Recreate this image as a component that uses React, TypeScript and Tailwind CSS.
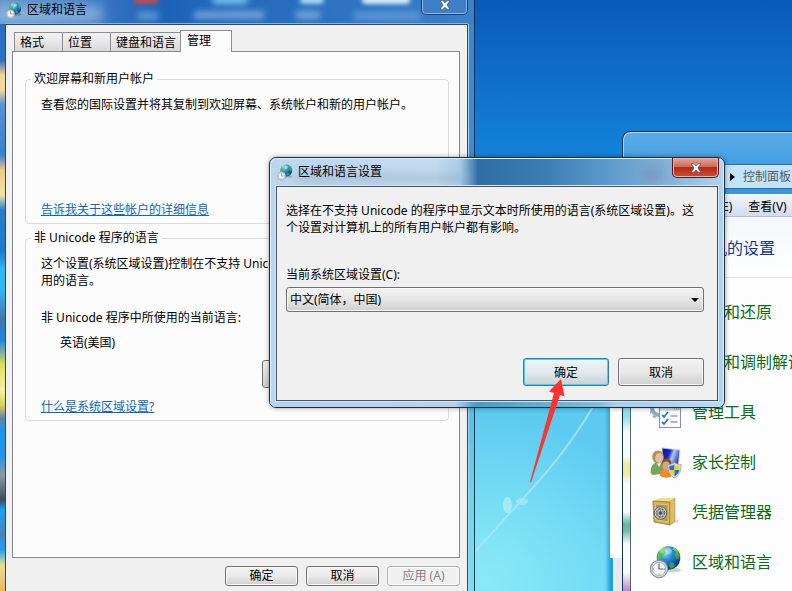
import type { ReactNode } from 'react';

function GlobeClock({ className }: { className: string }) {
  return (
    <svg viewBox="0 0 32 34" className={className} aria-hidden="true">
      <defs>
        <radialGradient id="globe" cx="0.35" cy="0.25" r="0.8">
          <stop offset="0" stopColor="#9be8ff" />
          <stop offset="0.4" stopColor="#2b8fd8" />
          <stop offset="1" stopColor="#062a8c" />
        </radialGradient>
        <linearGradient id="land" x1="0" y1="0" x2="1" y2="1">
          <stop offset="0" stopColor="#8be05a" />
          <stop offset="1" stopColor="#1c8a2c" />
        </linearGradient>
      </defs>
      <ellipse cx="22" cy="25" rx="9" ry="2.500" fill="#000" opacity="0.18" />
      <circle cx="18.500" cy="13" r="11.800" fill="url(#globe)" />
      <path d="M8 10c1-4 5-8 9-8.500l1 2-3 2 1 3-4 2-1 4-3 2c-1-2-1-4 0-6.500z" fill="url(#land)" />
      <path d="M24 2.500c3 1.500 5.500 4.500 6.200 8l-1.700 4-2.500-1-1-4 1-2.500-3-2.500z" fill="url(#land)" />
      <path d="M20 17l4 1.500 1 3-4 2.500-2-3z" fill="#35a544" />
      <ellipse cx="16" cy="6" rx="6" ry="3.500" fill="#fff" opacity="0.35" />
      <circle cx="9" cy="24" r="8.600" fill="#d5d9dd" stroke="#9299a0" strokeWidth="1.200" />
      <circle cx="9" cy="24" r="6.600" fill="#f3f6f8" stroke="#a9b1b8" strokeWidth="0.900" />
      <path d="M9 18.500V24h4.500M9 28.500v1M4 24h-1M15 24h-1" stroke="#5c666e" strokeWidth="1.100" fill="none" />
    </svg>
  );
}

function AdminTools() {
  return (
    <svg viewBox="0 0 32 34" className="h-[34px] w-8" aria-hidden="true">
      <circle cx="9" cy="13" r="7" fill="none" stroke="#8fa9c2" strokeWidth="4" />
      <circle cx="9" cy="13" r="9.500" fill="none" stroke="#9db5cb" strokeWidth="3" strokeDasharray="3 3" />
      <circle cx="22" cy="8" r="6" fill="none" stroke="#a9b4be" strokeWidth="3" />
      <rect x="9.500" y="12.500" width="21" height="20" fill="#fafbfc" stroke="#8b9196" />
      <rect x="10" y="13" width="20" height="2.500" fill="#d5dade" />
      <path d="M24 14h1M26 14h1M28 14h1" stroke="#666" />
      <path d="M12 20l2 2 4-5M12 27l2 2 4-5" fill="none" stroke="#2181b8" strokeWidth="1.800" />
      <path d="M20.500 21h7M20.500 27h7" stroke="#70777d" strokeWidth="1.200" />
    </svg>
  );
}

function ParentalControls() {
  return (
    <svg viewBox="0 0 32 34" className="h-[34px] w-8" aria-hidden="true">
      <defs>
        <linearGradient id="screen" x1="0" y1="0" x2="1" y2="0.4">
          <stop offset="0" stopColor="#08108c" />
          <stop offset="0.45" stopColor="#1c2cc8" />
          <stop offset="0.65" stopColor="#b5c6f6" />
          <stop offset="1" stopColor="#2844c0" />
        </linearGradient>
      </defs>
      <path d="M12 3l18 2-2 17-15-3z" fill="url(#screen)" stroke="#c9ced6" strokeWidth="0.800" />
      <path d="M0.500 28c0-7 3-11 8-11s7 3 7 9l-4 3-9 1z" fill="#7ba35c" />
      <path d="M6 17l3 5 3-5z" fill="#f0efe6" />
      <ellipse cx="8" cy="12" rx="5.800" ry="6.500" fill="#b08f5c" />
      <ellipse cx="9.200" cy="13" rx="4" ry="5" fill="#e3c09a" />
      <path d="M10 31c0-5 3-7 6-7s6 3 5 8c-4 1-8 1-11-1z" fill="#ef8a2e" />
      <circle cx="16.500" cy="18.500" r="5" fill="#7d5430" />
      <ellipse cx="16" cy="20.500" rx="3.600" ry="4" fill="#dca878" />
      <path d="M24.500 17.500c2 1.600 4.500 2 6.500 2 .3 6-1.500 11-6.500 13.500-5-2.500-6.800-7.500-6.500-13.500 2 0 4.500-.4 6.500-2z" fill="#dfe5ea" stroke="#8894a0" strokeWidth="0.700" />
      <path d="M24.500 19.300v5.700h-5c-.3-1.500-.3-3-.2-4.200 2 0 3.700-.5 5.200-1.500z" fill="#2272c8" />
      <path d="M24.500 19.300v5.700h5c.3-1.500.3-3 .2-4.200-2 0-3.700-.5-5.200-1.500z" fill="#f8cb28" />
      <path d="M19.500 25h5v6.400c-3-1.600-4.500-3.800-5-6.400z" fill="#f8cb28" />
      <path d="M29.500 25h-5v6.400c3-1.600 4.500-3.800 5-6.400z" fill="#2272c8" />
    </svg>
  );
}

function Safe() {
  return (
    <svg viewBox="0 0 32 34" className="h-[34px] w-8" aria-hidden="true">
      <path d="M20 28l9-4-1 3-8 3z" fill="#000" opacity="0.15" />
      <path d="M3 6l7-3h15l-5 4z" fill="#efdb98" />
      <path d="M3 6l17 1v23L4 27z" fill="#cfae55" stroke="#8d7230" strokeWidth="0.800" />
      <path d="M20 7l5-4v23l-5 4z" fill="#dcbf6a" stroke="#a88a40" strokeWidth="0.600" />
      <path d="M5.500 9l12.500.8v17L6 24.800z" fill="#b9963f" stroke="#ead68e" strokeWidth="0.700" />
      <circle cx="10.500" cy="18" r="6.300" fill="#c9ccce" stroke="#62666a" />
      <circle cx="10.500" cy="18" r="4" fill="none" stroke="#6a6e72" strokeWidth="1.500" strokeDasharray="2 1.200" />
      <path d="M10.500 13v10M5.500 18h10M7 14.500l7 7M14 14.500l-7 7" stroke="#808488" strokeWidth="0.900" />
      <circle cx="10.500" cy="18" r="1.800" fill="#54585c" />
    </svg>
  );
}

function CloseGlyph() {
  return (
    <svg viewBox="0 0 12 10" className="h-[10px] w-3" aria-hidden="true">
      <path
        d="M1 0.800h3.200L6 2.900 7.800.8H11L7.900 5 11 9.200H7.800L6 7.100 4.200 9.200H1L4.100 5z"
        fill="#fff"
        stroke="#4a4f5c"
        strokeWidth="0.700"
      />
    </svg>
  );
}

function Wallpaper() {
  return (
    <svg
      className="absolute inset-0 h-full w-full"
      viewBox="0 0 792 591"
      preserveAspectRatio="xMidYMid slice"
      aria-hidden="true"
    >
      <defs>
        <linearGradient id="sky" x1="0" y1="0" x2="0" y2="1">
          <stop offset="0" stopColor="#0a5ab8" />
          <stop offset="0.25" stopColor="#1380d8" />
          <stop offset="0.5" stopColor="#2ba3e4" />
          <stop offset="0.7" stopColor="#5bcaef" />
          <stop offset="1" stopColor="#68d6f5" />
        </linearGradient>
        <radialGradient id="glow" gradientUnits="userSpaceOnUse" cx="485" cy="580" r="170">
          <stop offset="0" stopColor="#8eebf8" stopOpacity="0.9" />
          <stop offset="1" stopColor="#8eebf8" stopOpacity="0" />
        </radialGradient>
        <linearGradient id="edge" x1="0" y1="0" x2="1" y2="0">
          <stop offset="0" stopColor="#2f9fd6" stopOpacity="0" />
          <stop offset="1" stopColor="#3a9cc8" stopOpacity="0.9" />
        </linearGradient>
      </defs>
      <rect width="792" height="591" fill="url(#sky)" />
      <rect x="300" y="400" width="360" height="191" fill="url(#glow)" />
      <path d="M472 555L511 512C540 480 568 450 594 405" fill="none" stroke="#a9e4f8" strokeWidth="2" opacity="0.85" />
      <ellipse cx="507.500" cy="505" rx="4.500" ry="8" fill="#a9ecf6" opacity="0.85" />
      <ellipse cx="522" cy="501.500" rx="6" ry="3.500" fill="#a2e6f6" opacity="0.8" />
      <rect x="605" y="405" width="5" height="186" fill="url(#edge)" />
    </svg>
  );
}

const panelItems: { name: string; icon: ReactNode }[] = [
  { name: '备份和还原', icon: null },
  { name: '电话和调制解调器', icon: null },
  { name: '管理工具', icon: <AdminTools /> },
  { name: '家长控制', icon: <ParentalControls /> },
  { name: '凭据管理器', icon: <Safe /> },
  { name: '区域和语言', icon: <GlobeClock className="h-[34px] w-8" /> },
];

function ControlPanelWindow() {
  return (
    <section className="absolute top-[131px] right-0 bottom-0 left-[622px] flex flex-col overflow-hidden rounded-tl-lg border-t border-l border-[#12335a] bg-gradient-to-b from-[#5aade9] to-[#3a97de] to-10% whitespace-nowrap shadow-[inset_1px_1px_0_#a5d6f6]">
      <div className="mt-8 ml-[7px] flex h-[25px] items-center gap-2 border border-r-0 border-[#2f6f9f] bg-[#c5e3f7] pl-[99px] text-xs text-[#4d5c68]">
        <svg viewBox="0 0 5 8" className="h-2 w-[5px]" aria-hidden="true">
          <path d="M0 0l5 4-5 4z" fill="#000" />
        </svg>
        <span>控制面板</span>
      </div>
      <div className="flex min-h-0 flex-1 pt-[5px]">
        <div className="w-[7px] bg-[linear-gradient(180deg,#b5d5ee_0,#dcebf5_200px,#8be0e6_215px,#8be0e6_222px,#f8fcfc_238px,#f8fcfc_262px,#f0ec9c_270px,#f0ec9c_280px,#f8fcfc_290px,#f8fcfc_318px,#62b79c_330px,#72bca4_337px,#f8fcfc_350px,#f8fcfc_378px,#b887b8_398px)]" />
        <div className="min-w-0 flex-1 border-l border-[#53616c] bg-[#fdfdfe]">
          <nav className="flex h-[23px] items-center gap-4 border-b border-[#b6bccb] bg-gradient-to-b from-[#f3f6fb] to-[#d4dbed] pt-1 pl-2.5 text-xs text-black">
            <span>文件(F)</span>
            <span>编辑(E)</span>
            <span>查看(V)</span>
          </nav>
          <header className="flex h-[61px] items-center border-b border-[#dfe5ea] bg-gradient-to-b from-[#f4f8fc] to-white pt-0.5 pl-4">
            <h2 className="text-base text-[#103a94]">调整计算机的设置</h2>
          </header>
          <ul className="pt-[9px] pl-[19px] text-base text-[#0e6b1c]">
            {panelItems.map((item) => (
              <li key={item.name} className="flex h-[50px] items-center gap-2.5">
                <span className="flex w-8 shrink-0">{item.icon}</span>
                <a href="#item">{item.name}</a>
              </li>
            ))}
          </ul>
        </div>
      </div>
    </section>
  );
}

function SmallButton({ children, disabled = false }: { children: ReactNode; disabled?: boolean }) {
  return (
    <button
      type="button"
      disabled={disabled}
      className="h-5 w-[73px] rounded-[3px] border border-[#707070] bg-gradient-to-b from-[#f2f2f2] via-[#ebebeb] via-50% to-[#cfcfcf] text-xs leading-none text-black shadow-[inset_0_0_0_1px_#fafafa] disabled:border-[#adb2b5] disabled:bg-none disabled:text-[#838383]"
    >
      {children}
    </button>
  );
}

function Tab({ children, selected = false }: { children: ReactNode; selected?: boolean }) {
  return (
    <button
      type="button"
      role="tab"
      aria-selected={selected}
      className="-mr-px h-[19px] border border-b-0 border-[#8c8e94] bg-gradient-to-b from-[#f3f3f3] to-[#d9d9d9] pt-0.5 pr-[18px] pl-[5px] text-xs leading-none nth-3:pr-1 aria-selected:z-10 aria-selected:-mb-px aria-selected:h-[22px] aria-selected:bg-none aria-selected:bg-[#fcfcfc] aria-selected:pb-1 aria-selected:pl-1.5 aria-selected:pr-5"
    >
      {children}
    </button>
  );
}

function Group({ title, children }: { title: string; children: ReactNode }) {
  return (
    <fieldset className="rounded-[4px] border border-[#d8dcdf] px-[5px] pb-[5px]">
      <legend className="px-[3px] leading-[18px]">{title}</legend>
      {children}
    </fieldset>
  );
}

function RegionWindow() {
  return (
    <section className="absolute inset-y-0 left-0 flex w-[475px] flex-col overflow-hidden border-r border-[#0c3358] bg-[linear-gradient(180deg,#3d84cb_0,#3f90d8_200px,#55bce4_400px,#62dbe8_500px,#6ee6ea_100%)]">
      <div className="absolute inset-y-0 left-0 w-[5px] bg-[linear-gradient(180deg,#2a6fc0_0,#2a6fc0_60px,#f0d79a_75px,#f0d79a_90px,#5b8fd0_105px,#3a80cf_155px,#f0c890_170px,#efe3a0_195px,#2a7ccd_210px,#1f77cc_250px,#35b5f0_270px,#35b5f0_290px,#3d77a8_320px,#1b84dc_340px,#e3dc62_365px,#f4f2a0_390px,#d9cf60_405px,#6784a0_418px,#1f95ea_430px,#1f95ea_455px,#8a98a8_475px,#3c4a5c_500px,#1fa0ee_510px,#4a83bc_535px,#1fa0ee_550px,#e8dc98_565px,#edb765_591px)]" />
      <header className="relative flex h-6 shrink-0 items-start justify-between overflow-hidden bg-gradient-to-r from-[#5a90cc] via-[#1c63b8] via-35% to-[#3c80c8]">
        <div className="absolute top-1 -left-2 h-5 w-28 rounded-full bg-[#a9c9e8] opacity-60 blur-[6px]" />
        <div className="absolute top-[-4px] left-[134px] h-2 w-6 rounded-full bg-[#c34a4a] blur-[2px]" />
        <div className="absolute top-3 left-[138px] h-2 w-5 bg-[#86b5e2] opacity-60 blur-[3px]" />
        <div className="absolute top-[-4px] left-[212px] h-2 w-9 rounded-full bg-[#8cdcf8] opacity-80 blur-[3px]" />
        <div className="absolute top-[11px] left-[194px] h-2 w-[70px] bg-[#8fbbe6] opacity-70 blur-[3px]" />
        <div className="absolute top-[-4px] left-[300px] h-2 w-6 rounded-full bg-[#a4d8f2] blur-[2px]" />
        <div className="absolute top-[11px] left-[296px] h-2 w-6 bg-[#8fbbe6] opacity-70 blur-[3px]" />
        <div className="absolute top-[-4px] left-[362px] h-2 w-12 rounded-full bg-[#dcebf7] blur-[2px]" />
        <div className="absolute top-3 left-[354px] h-2 w-[66px] bg-[#7aace0] opacity-60 blur-[3px]" />
        <div className="relative flex items-center gap-[5px] pt-px pl-1.5">
          <GlobeClock className="h-[17px] w-4" />
          <h1 className="text-xs leading-[18px] text-black">区域和语言</h1>
        </div>
        <button
          type="button"
          aria-label="关闭"
          className="relative mr-1.5 flex h-[15px] w-[47px] justify-center rounded-b-[5px] border border-t-0 border-[#1d3f74] bg-[#3f7fc8] shadow-[inset_0_-1px_0_#8bb8e6,inset_1px_0_0_#8bb8e6,inset_-1px_0_0_#8bb8e6]"
        >
          <CloseGlyph />
        </button>
      </header>
      <div className="relative mr-[6px] ml-[5px] flex-1 border border-b-0 border-[#27496f] bg-[#f0f0f0] pt-[5px] pr-[7px] pl-1.5 shadow-[0_-1px_0_#86b4e2,1px_0_0_#a6d3ee]">
        <div role="tablist" className="relative flex items-end pl-0.5">
          <Tab>格式</Tab>
          <Tab>位置</Tab>
          <Tab>键盘和语言</Tab>
          <Tab selected>管理</Tab>
        </div>
        <div role="tabpanel" className="flex h-[507px] flex-col gap-[5px] border border-[#838790] bg-[#fcfcfc] pt-[18px] pr-2.5 pl-3 text-xs leading-[17px]">
          <Group title="欢迎屏幕和新用户帐户">
            <div className="flex h-[130px] flex-col items-start justify-between pt-2 pl-2.5">
              <p>查看您的国际设置并将其复制到欢迎屏幕、系统帐户和新的用户帐户。</p>
              <a href="#accounts" className="text-[#1166b8] underline">告诉我关于这些帐户的详细信息</a>
            </div>
          </Group>
          <Group title="非 Unicode 程序的语言">
            <div className="flex flex-col items-start pt-2 pr-3 pl-2.5">
              <p>这个设置(系统区域设置)控制在不支持 Unicode 的程序中显示文本时所使用的语言。</p>
              <p className="mt-5">非 Unicode 程序中所使用的当前语言:</p>
              <p className="mt-2 pl-[19px]">英语(美国)</p>
              <button type="button" className="mt-[9px] h-7 w-[169px] self-end rounded-[3px] border border-[#707070] bg-gradient-to-b from-[#f2f2f2] to-[#cfcfcf]">
                更改系统区域设置(C)...
              </button>
              <a href="#locale" className="mt-2.5 text-[#1166b8] underline">什么是系统区域设置?</a>
            </div>
          </Group>
        </div>
        <div className="flex justify-end gap-2 pt-2">
          <SmallButton>确定</SmallButton>
          <SmallButton>取消</SmallButton>
          <SmallButton disabled>应用 (A)</SmallButton>
        </div>
      </div>
    </section>
  );
}

function LocaleDialog() {
  return (
    <section
      role="dialog"
      aria-labelledby="locale-title"
      className="absolute top-[157px] left-[269px] w-[456px] rounded-[7px] border border-[#1c2f42] bg-[linear-gradient(90deg,#bcd6ef_0,#c4daf0_165px,#a9cbe8_190px,#2f6fa5_208px,#3a7bb0_270px,#5d9bcc_340px,#86b3da_400px,#b4d3ec_100%)] px-1.5 pb-1.5 shadow-[inset_0_0_0_1px_#e0effb,0_0_5px_#00000066]"
    >
      <div className="pointer-events-none absolute right-0 bottom-0 left-0 h-1.5 rounded-b-[6px] bg-[linear-gradient(90deg,#b5d2ee_0,#b9d3ee_185px,#4a9cc4_206px,#7dbfe0_330px,#a9cdea_345px,#b9dcf5_100%)]" />
      <header className="relative flex h-7 justify-between">
        <div className="absolute top-4 left-5 h-2 w-[170px] bg-[#8fa8bf] opacity-50 blur-[4px]" />
        <div className="absolute top-2 left-[364px] h-4 w-6 rounded-full bg-[#7795b8] opacity-60 blur-[4px]" />
        <div className="relative flex items-center gap-[5px] pl-px">
          <GlobeClock className="h-[17px] w-4" />
          <h2 id="locale-title" className="text-xs text-black">区域和语言设置</h2>
        </div>
        <button
          type="button"
          aria-label="关闭"
          className="relative -mr-px flex h-5 w-[47px] items-center justify-center rounded-b-[5px] border border-t-0 border-[#4b1c22] bg-[linear-gradient(180deg,#e3a79b_0,#cf6a58_45%,#b42a1a_50%,#c8503a_100%)] shadow-[inset_0_0_0_1px_#e9b0a5]"
        >
          <CloseGlyph />
        </button>
      </header>
      <div className="relative border border-[#42566a] bg-[#f0f0f0] px-[9px] pt-[15px] pb-3.5 text-xs leading-[17px] shadow-[0_0_0_1px_#d3e6f7]">
        <p className="pr-3.5">选择在不支持 Unicode 的程序中显示文本时所使用的语言(系统区域设置)。这个设置对计算机上的所有用户帐户都有影响。</p>
        <label htmlFor="locale" className="mt-[30px] block">
          当前系统区域设置(C):
        </label>
        <div className="relative mt-1 mr-1">
          <select
            id="locale"
            className="block h-[25px] w-full appearance-none rounded-[3px] border border-[#707070] bg-gradient-to-b from-[#f2f2f2] via-[#e6e6e6] via-50% to-[#cfcfcf] px-[3px] text-xs text-black shadow-[inset_0_0_0_1px_#f8f8f8]"
          >
            <option>中文(简体，中国)</option>
          </select>
          <svg viewBox="0 0 8 4" className="pointer-events-none absolute top-[11px] right-[5px] h-1 w-2" aria-hidden="true">
            <path d="M0 0h8L4 4z" fill="#000" />
          </svg>
        </div>
        <div className="mt-[46px] mr-1 flex justify-end gap-[9px]">
          <button
            type="button"
            className="h-7 w-[86px] rounded-[3px] border border-[#2f7ea6] bg-gradient-to-b from-[#eef4f7] via-[#e2eaee] via-50% to-[#c6d1d6] shadow-[inset_0_0_0_1px_#4fd0f0]"
          >
            确定
          </button>
          <button
            type="button"
            className="h-7 w-[86px] rounded-[3px] border border-[#707070] bg-gradient-to-b from-[#f2f2f2] via-[#e8e8e8] via-50% to-[#cfcfcf] shadow-[inset_0_0_0_1px_#f8f8f8]"
          >
            取消
          </button>
        </div>
      </div>
    </section>
  );
}

export default function App() {
  return (
    <main className="relative h-screen w-full overflow-hidden bg-[#1482da] font-['Noto_Sans','Noto_Sans_CJK_SC',sans-serif]">
      <Wallpaper />
      <div className="absolute top-[300px] bottom-0 left-[610px] flex w-4 flex-col bg-[#fdfdfd]">
        <div className="mt-auto h-[33px] border-l-[3px] border-[#1ba3e0] bg-[#e6e8ea]" />
      </div>
      <ControlPanelWindow />
      <RegionWindow />
      <LocaleDialog />
      <svg viewBox="0 0 36 104" className="pointer-events-none absolute top-[379px] left-[529px] h-[104px] w-9" aria-hidden="true">
        <path d="M32 0L20 12.500l5 1.500L1 103l1 .5L31 16l4.500 1.500z" fill="#fb3431" />
      </svg>
    </main>
  );
}
